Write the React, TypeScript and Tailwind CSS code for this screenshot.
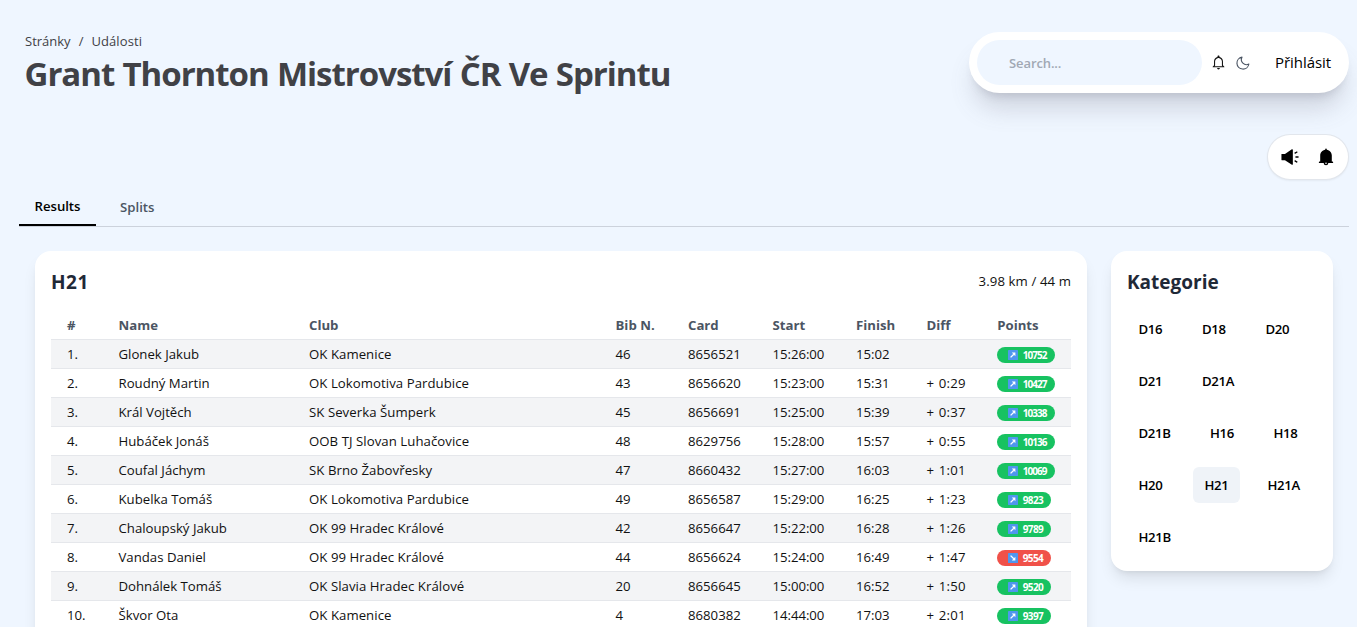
import { IoMdNotificationsOutline } from "react-icons/io";
import { AiFillSound } from "react-icons/ai";

type Row = [string, string, string, string, string, string, string, string, boolean];

const rows: Row[] = [
  ["Glonek Jakub", "OK Kamenice", "46", "8656521", "15:26:00", "15:02", "", "10752", true],
  ["Roudný Martin", "OK Lokomotiva Pardubice", "43", "8656620", "15:23:00", "15:31", "+ 0:29", "10427", true],
  ["Král Vojtěch", "SK Severka Šumperk", "45", "8656691", "15:25:00", "15:39", "+ 0:37", "10338", true],
  ["Hubáček Jonáš", "OOB TJ Slovan Luhačovice", "48", "8629756", "15:28:00", "15:57", "+ 0:55", "10136", true],
  ["Coufal Jáchym", "SK Brno Žabovřesky", "47", "8660432", "15:27:00", "16:03", "+ 1:01", "10069", true],
  ["Kubelka Tomáš", "OK Lokomotiva Pardubice", "49", "8656587", "15:29:00", "16:25", "+ 1:23", "9823", true],
  ["Chaloupský Jakub", "OK 99 Hradec Králové", "42", "8656647", "15:22:00", "16:28", "+ 1:26", "9789", true],
  ["Vandas Daniel", "OK 99 Hradec Králové", "44", "8656624", "15:24:00", "16:49", "+ 1:47", "9554", false],
  ["Dohnálek Tomáš", "OK Slavia Hradec Králové", "20", "8656645", "15:00:00", "16:52", "+ 1:50", "9520", true],
  ["Škvor Ota", "OK Kamenice", "4", "8680382", "14:44:00", "17:03", "+ 2:01", "9397", true],
];

const grid =
  "grid grid-cols-[51.5px_190.5px_306.5px_72.5px_84.5px_83.5px_70.5px_70.7px_1fr] pl-4";

// Categories grouped by visual line, each with the width of its button.
const categories: [string, string][][] = [
  [["D16", "w-[47.5px]"], ["D18", "w-[47.5px]"], ["D20", "w-[50px]"]],
  [["D21", "w-[47.5px]"], ["D21A", "w-14"]],
  [["D21B", "w-[55.5px]"], ["H16", "w-[47.5px]"], ["H18", "w-12"]],
  [["H20", "w-[50px]"], ["H21", "w-[47px]"], ["H21A", "w-14"]],
  [["H21B", "w-14"]],
];

function MoonIcon() {
  return (
    <svg
      viewBox="0 0 24 24"
      className="ml-2 size-4 text-[#4b5563]"
      fill="none"
      stroke="currentColor"
      strokeWidth="1.7"
      strokeLinejoin="round"
    >
      <path d="M10.5 3.2a7.6 7.6 0 0 0 10.3 10.3A9 9 0 1 1 10.5 3.2Z" />
    </svg>
  );
}

function BellIcon() {
  return (
    <svg viewBox="0 0 20 20" className="size-5" fill="currentColor">
      <path d="M9.2 2.8V2.4a.8.8 0 0 1 1.6 0v.4c2.9.4 5 2.8 5 5.7v6h.7c.4 0 .6.3.6.6v.9H2.9v-.9c0-.3.2-.6.6-.6h.7v-6c0-2.9 2.1-5.3 5-5.7Z" />
      <path d="M7.7 16h4.6a2.3 2.3 0 0 1-4.6 0Z" />
      <circle cx="10" cy="16.3" r=".8" fill="#fff" />
    </svg>
  );
}

function ArrowIcon({ up }: { up: boolean }) {
  return (
    <svg viewBox="0 0 10 10" className="size-[10px] shrink-0">
      <rect width="10" height="10" rx="0.4" fill="#4f96ee" />
      <g transform={up ? undefined : "matrix(1 0 0 -1 0 10)"}>
        <path d="M2.6 7.4 5.8 4.2" fill="none" stroke="#fff" strokeWidth="1.3" />
        <path d="M3.8 2.6h3.6v3.6Z" fill="#fff" />
      </g>
    </svg>
  );
}

function Points({ value, up }: { value: string; up: boolean }) {
  return (
    <span
      className={`inline-flex h-4 min-w-[54px] items-center gap-[5px] rounded-full pr-2 pl-[10.5px] text-[10px] font-bold text-white ${up ? "bg-[#17c261]" : "bg-[#f05149]"}`}
    >
      <ArrowIcon up={up} />
      <span className={`pt-px ${value.length === 4 ? "tracking-[-0.6px]" : "tracking-[-0.95px]"}`}>
        {value}
      </span>
    </span>
  );
}

export default function App() {
  return (
    <div className="h-[627px] overflow-hidden bg-[#eff6ff] font-['Open_Sans','Noto_Sans',sans-serif] text-[13.2px] text-[#111]">
      <header className="flex h-[93px] items-end justify-between pr-2 pl-[25px]">
        <div className="h-[61px]">
          <div className="flex h-[19px] items-center gap-2 text-[13px] text-[#3f4146]">
            <span>Stránky</span>
            <span>/</span>
            <span className="tracking-[0.1px]">Události</span>
          </div>
          <h1 className="ml-[-0.5px] text-[33px] leading-[46px] font-bold tracking-[-1.02px] [word-spacing:0.7px] whitespace-nowrap text-[#404146]">
            Grant Thornton Mistrovství ČR Ve Sprintu
          </h1>
        </div>
        <div className="flex h-[61px] w-[380px] items-center rounded-full bg-white pl-2 shadow-[0_20px_25px_-5px_rgba(100,100,115,0.23),0_8px_10px_-6px_rgba(100,100,115,0.23)]">
          <div className="flex h-[45px] w-[225px] items-center rounded-full bg-[#eff6ff] pt-[2px] pl-8 text-[13px] font-semibold tracking-[-0.1px] text-[#a1a8b4]">
            Search...
          </div>
          <IoMdNotificationsOutline className="ml-2 size-[17px]" />
          <MoonIcon />
          <span className="ml-[24px] text-[15px] tracking-[-0.05px] text-black">Přihlásit</span>
        </div>
      </header>

      <div className="flex h-[93px] items-start justify-end pt-[42px] pr-[9px]">
        <div className="flex h-11 w-[80px] items-center justify-between rounded-full bg-white pr-3 pl-3 text-black shadow-[0_0_0_1px_#e2e6ec,0_1px_2px_1px_rgba(0,0,0,0.05)]">
          <AiFillSound className="size-5" />
          <BellIcon />
        </div>
      </div>

      <nav className="mr-2 ml-[19px] flex h-[41px] items-start border-b border-[#ccd2dc] font-semibold">
        <div className="flex h-10 w-[77px] items-center justify-center border-b-2 border-black pt-[4px] tracking-[-0.05px] text-black">
          Results
        </div>
        <div className="flex h-10 items-center pt-[4px] pl-6 text-[#4b5563]">Splits</div>
      </nav>

      <main className="flex items-start gap-6 pt-6 pl-[35px]">
        <section className="h-[500px] w-[1052px] rounded-2xl bg-white px-4 pt-4 shadow-[0_10px_15px_-3px_rgba(0,0,0,0.1),0_4px_6px_-4px_rgba(0,0,0,0.1)]">
          <div className="flex h-[30px] items-center justify-between">
            <h2 className="text-[19px] font-bold tracking-[0.5px] text-[#1f2937]">H21</h2>
            <span className="tracking-[0.1px]">3.98 km / 44 m</span>
          </div>
          <div className={`${grid} mt-[13px] h-[29px] items-center pt-[2px] font-bold text-[#4b5563]`}>
            <span>#</span>
            <span>Name</span>
            <span>Club</span>
            <span>Bib N.</span>
            <span>Card</span>
            <span>Start</span>
            <span>Finish</span>
            <span>Diff</span>
            <span>Points</span>
          </div>
          {rows.map(([name, club, bib, card, start, finish, diff, points, up], i) => (
            <div
              key={name}
              className={`${grid} h-[29px] items-center border-t border-[#e5e7eb] pt-[2px] ${i % 2 === 0 ? "bg-[#f3f4f6]" : ""}`}
            >
              <span>{i + 1}.</span>
              <span>{name}</span>
              <span className="tracking-[0.05px]">{club}</span>
              <span>{bib}</span>
              <span>{card}</span>
              <span className="tracking-[-0.05px]">{start}</span>
              <span>{finish}</span>
              <span className="tracking-[0.3px] [word-spacing:0.6px]">{diff}</span>
              <span className="flex items-center">
                <Points value={points} up={up} />
              </span>
            </div>
          ))}
        </section>

        <aside className="h-[320px] w-[222px] rounded-2xl bg-white pt-4 shadow-[0_10px_15px_-3px_rgba(0,0,0,0.1),0_4px_6px_-4px_rgba(0,0,0,0.1)]">
          <h2 className="pl-4 text-[19px] leading-[30px] font-bold text-[#1f2937]">Kategorie</h2>
          <div className="mt-[14px] flex flex-col gap-4 pl-4">
            {categories.map((line) => (
              <div key={line[0][0]} className="flex gap-4">
                {line.map(([name, width]) => (
                  <span
                    key={name}
                    className={`flex h-9 items-center rounded-md pt-[2px] pl-[11.5px] font-semibold tracking-[-0.3px] text-black ${width} ${name === "H21" ? "bg-[#eff3f8]" : ""}`}
                  >
                    {name}
                  </span>
                ))}
              </div>
            ))}
          </div>
        </aside>
      </main>
    </div>
  );
}
